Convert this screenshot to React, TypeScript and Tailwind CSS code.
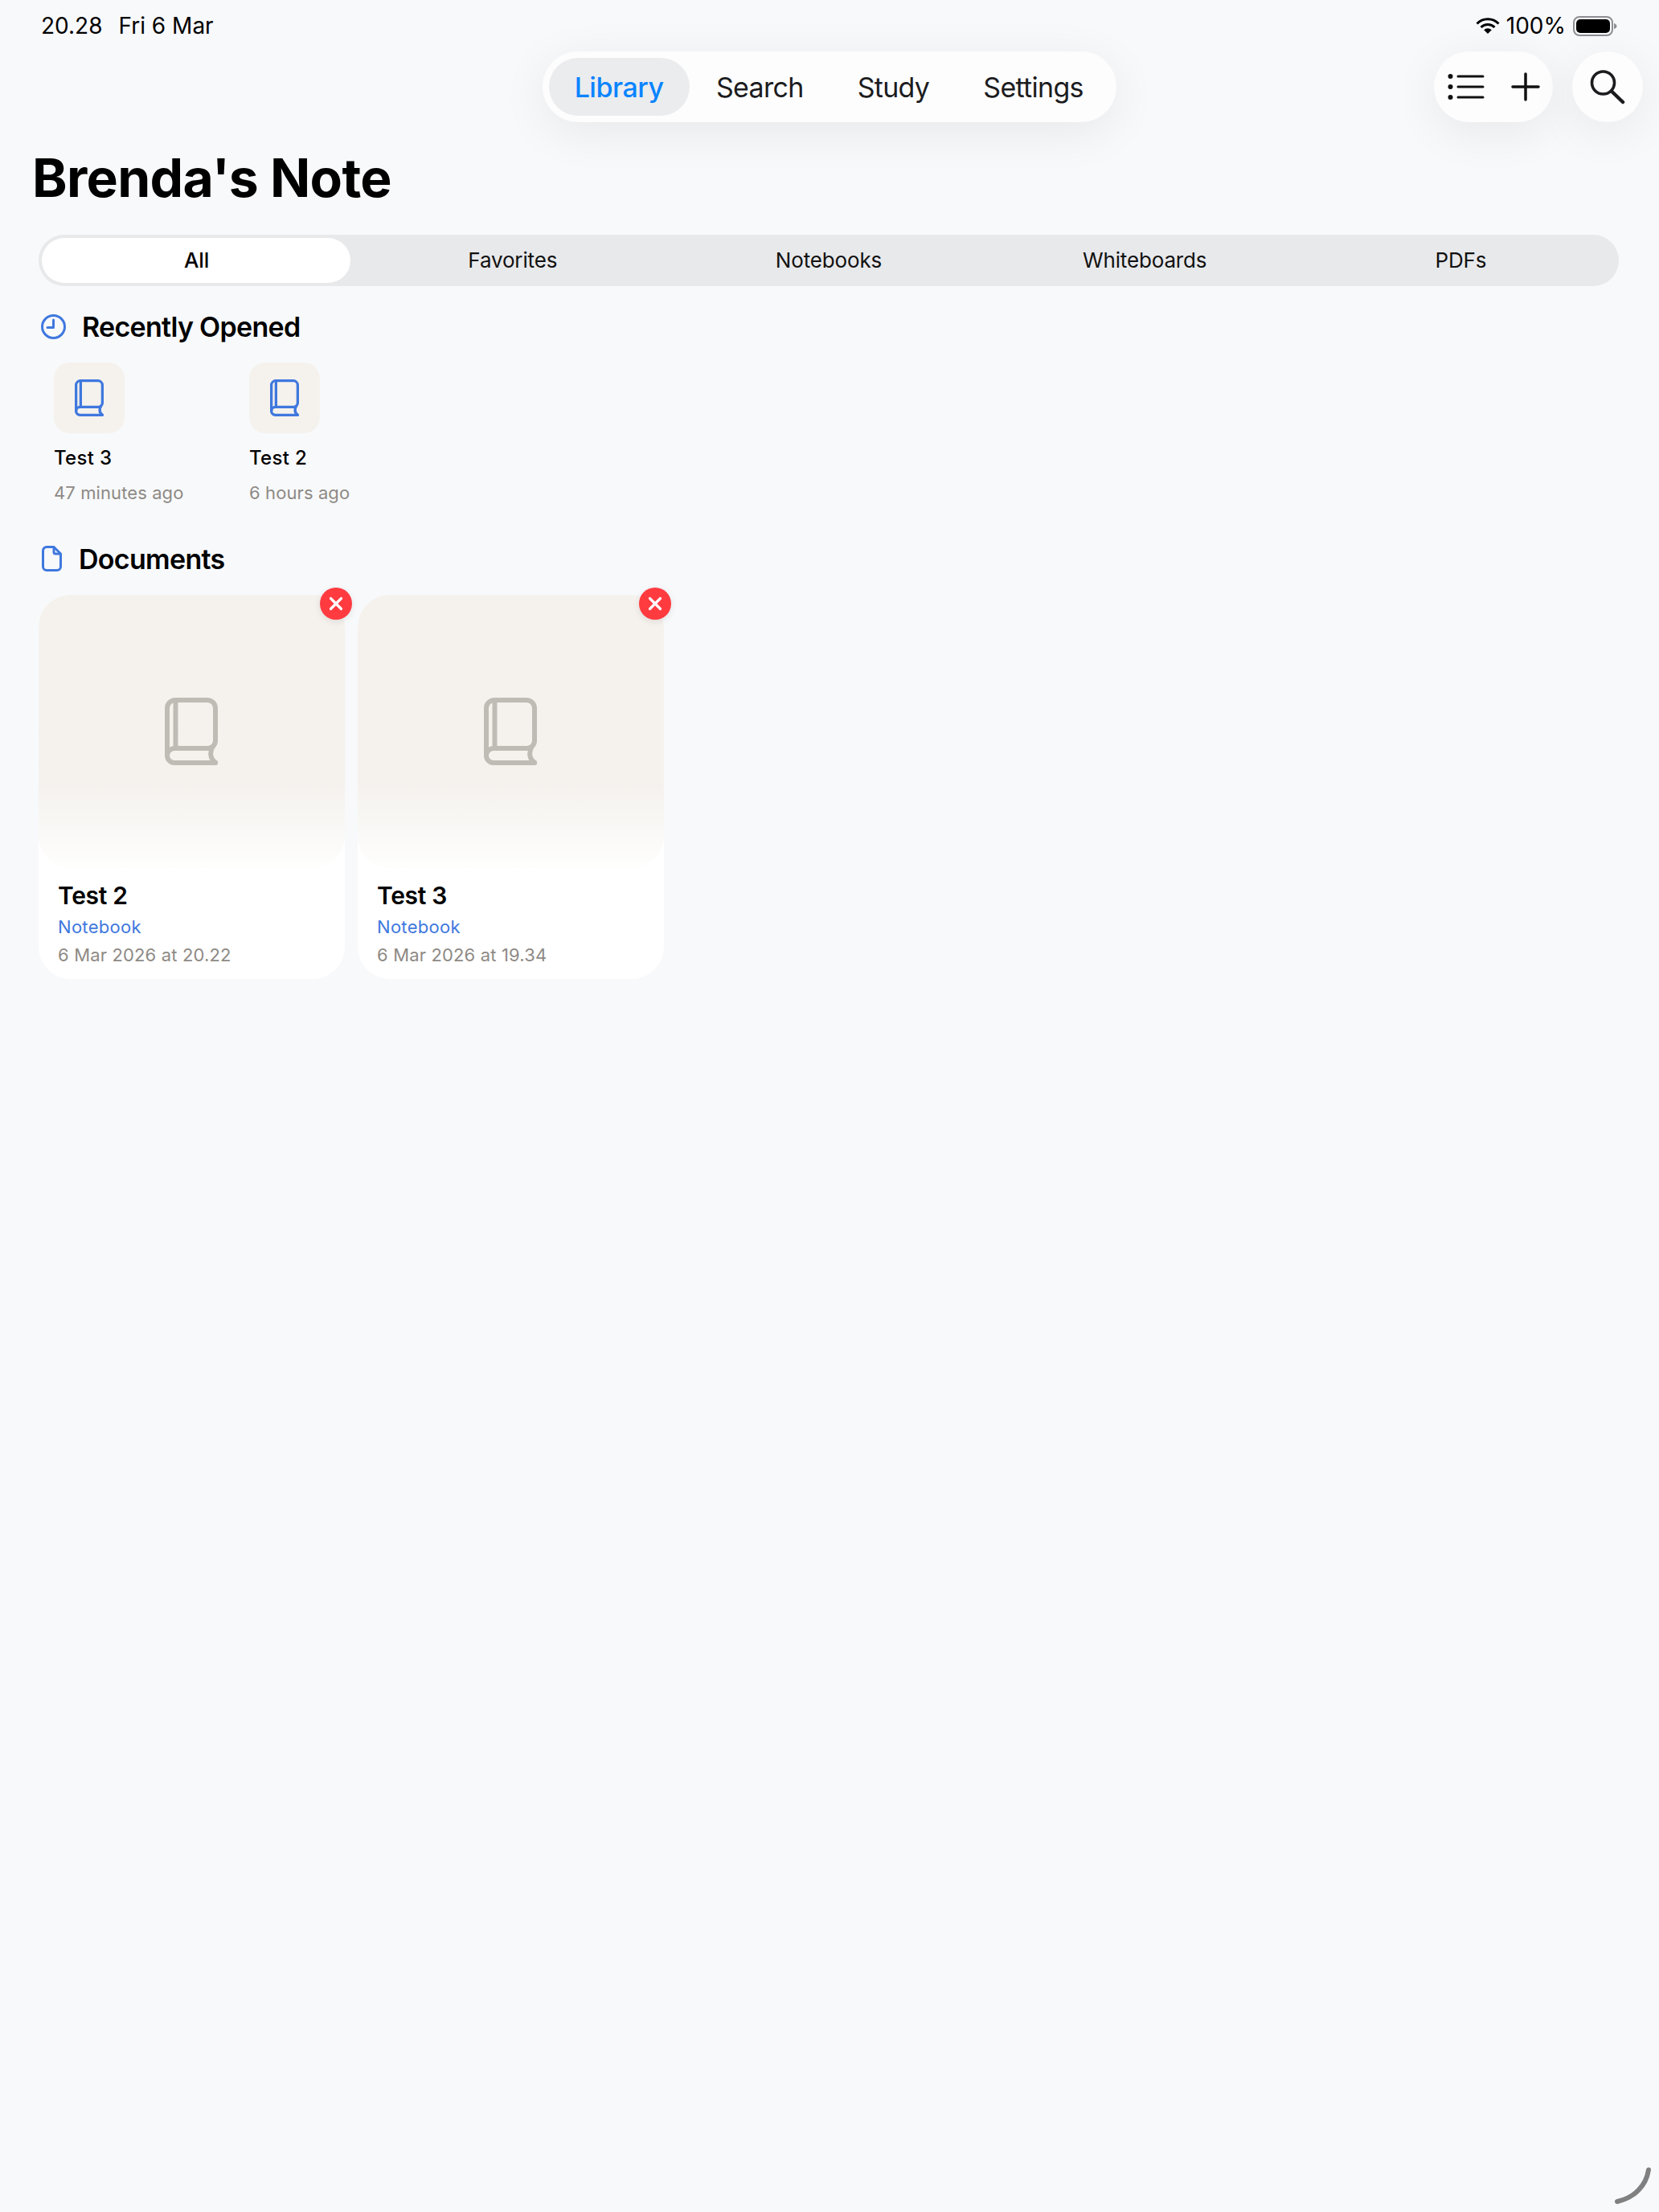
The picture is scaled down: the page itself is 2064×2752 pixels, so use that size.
import React from "react";

const tabs = ["Library", "Search", "Study", "Settings"];
const filters = ["All", "Favorites", "Notebooks", "Whiteboards", "PDFs"];

const recents = [
  { title: "Test 3", time: "47 minutes ago" },
  { title: "Test 2", time: "6 hours ago" },
];

const documents = [
  { title: "Test 2", date: "6 Mar 2026 at 20.22" },
  { title: "Test 3", date: "6 Mar 2026 at 19.34" },
];

function BookIcon({ className }: { className: string }) {
  return (
    <svg viewBox="0 0 66 84" fill="none" stroke="currentColor" strokeWidth="6" strokeLinejoin="round" strokeLinecap="round" className={className}>
      <path d="M13 3H53a10 10 0 0 1 10 10V53a10 10 0 0 1-3.500 8C56 68 56 76 63.500 81H12a9 9 0 0 1-9-9V13A10 10 0 0 1 13 3Z" />
      <path d="M3 72a9 9 0 0 1 9-9H53a10 10 0 0 0 6.500-2" />
      <path d="M13.500 3V63" />
    </svg>
  );
}

function StatusBar() {
  return (
    <div className="flex h-[64px] items-center justify-between pl-[51px] pr-[52px] text-[28px] text-black">
      <div className="flex gap-[20px]">
        <span>20.28</span>
        <span>Fri 6 Mar</span>
      </div>
      <div className="flex items-center">
        <svg viewBox="0 0 30 20" className="h-[20px] w-[30px]" fill="none" stroke="black" strokeWidth="3">
          <path d="M1.500 7.500A19 19 0 0 1 28.500 7.500" />
          <path d="M6.500 12A12 12 0 0 1 23.500 12" />
          <path d="M15 20L10.200 15.200A6.800 6.800 0 0 1 19.800 15.200Z" fill="black" stroke="none" />
        </svg>
        <span className="ml-[8px]">100%</span>
        <svg viewBox="0 0 55 25" className="ml-[9px] h-[25px] w-[55px]">
          <rect x="1" y="1" width="48" height="23" rx="7" fill="none" stroke="#8e8e93" strokeWidth="2" />
          <rect x="4" y="4" width="42" height="17" rx="5" fill="black" />
          <path d="M51 9c2 .5 3.500 2 3.500 3.500S53 15.500 51 16Z" fill="#8e8e93" />
        </svg>
      </div>
    </div>
  );
}

function NavBar() {
  return (
    <div className="grid h-[88px] grid-cols-[1fr_auto_1fr]">
      <div />
      <div className="flex items-center rounded-full bg-[#fdfdfe] p-[8px] shadow-[0_12px_60px_rgba(0,0,0,0.07)]">
        {tabs.map((tab, i) => (
          <div
            key={tab}
            className={
              i === 0
                ? "flex h-[72px] items-center rounded-full bg-[#ebecee] px-[32px] text-[34px] font-medium tracking-[-0.5px] text-[#0a84ff]"
                : "flex h-[72px] items-center px-[33.5px] text-[34px] tracking-[-0.7px] text-[#1c1c1e]"
            }
          >
            {tab}
          </div>
        ))}
      </div>
      <div className="flex justify-end gap-[24px] pr-[20px]">
        <div className="flex h-[88px] w-[148px] items-center justify-center gap-[33px] rounded-full bg-[#fdfdfe] shadow-[0_12px_60px_rgba(0,0,0,0.07)]">
          <svg viewBox="0 0 46 32" className="h-[32px] w-[46px]" fill="none" stroke="#111" strokeWidth="3" strokeLinecap="round">
            <circle cx="3.500" cy="3" r="3" fill="#111" stroke="none" />
            <circle cx="3.500" cy="16" r="3" fill="#111" stroke="none" />
            <circle cx="3.500" cy="29" r="3" fill="#111" stroke="none" />
            <path d="M13 3H44M13 16H44M13 29H44" />
          </svg>
          <svg viewBox="0 0 36 36" className="h-[36px] w-[36px]" fill="none" stroke="#111" strokeWidth="3.500" strokeLinecap="round">
            <path d="M18 2V34M2 18H34" />
          </svg>
        </div>
        <div className="flex h-[88px] w-[88px] items-center justify-center rounded-full bg-[#fdfdfe] shadow-[0_12px_60px_rgba(0,0,0,0.07)]">
          <svg viewBox="0 0 44 44" className="h-[44px] w-[44px]" fill="none" stroke="#1c1c1e" strokeWidth="3.600" strokeLinecap="round">
            <circle cx="16.500" cy="17" r="14" />
            <path d="M27 27.500L41 41" strokeWidth="4.500" />
          </svg>
        </div>
      </div>
    </div>
  );
}

function FilterBar() {
  return (
    <div className="relative mx-[48px] grid h-[64px] w-[1966px] grid-cols-5 items-center rounded-full bg-[#e8e9eb]">
      <div className="absolute left-[4px] top-[4px] h-[56px] w-[384px] rounded-full bg-white" />
      {filters.map((filter, i) => (
        <div
          key={filter}
          className={
            i === 0
              ? "relative pb-[1px] text-center text-[26px] font-medium tracking-[-0.15px] text-black"
              : "relative pb-[1px] text-center text-[26px] tracking-[-0.15px] text-[#111]"
          }
        >
          {filter}
        </div>
      ))}
    </div>
  );
}

function RecentItem({ title, time }: { title: string; time: string }) {
  return (
    <div className="w-[243px]">
      <div className="flex h-[88px] w-[88px] items-center justify-center rounded-[20px] bg-[#f5f2ee]">
        <BookIcon className="h-[46px] w-[36px] text-[#3f78de]" />
      </div>
      <div className="mt-[16px] text-[24px] font-[450] leading-[30px] tracking-[0.3px] text-black">{title}</div>
      <div className="mt-[13px] text-[22px] leading-[30px] tracking-[0.1px] text-[#8e8a85]">{time}</div>
    </div>
  );
}

function DocumentCard({ title, date }: { title: string; date: string }) {
  return (
    <div className="relative h-[478px] w-[381px] rounded-[40px] bg-white">
      <div className="flex h-[340px] items-center justify-center rounded-[40px] bg-gradient-to-b from-[#f5f2ee] from-70% to-[#fefefd]">
        <BookIcon className="mr-[1px] h-[84px] w-[66px] text-[#bfbbb5]" />
      </div>
      <div className="absolute right-[-9px] top-[-9px] flex h-[40px] w-[40px] items-center justify-center rounded-full bg-[#ff3b40] shadow-[0_2px_8px_rgba(0,0,0,0.1)]">
        <svg viewBox="0 0 18 18" className="h-[18px] w-[18px]" stroke="white" strokeWidth="3.200" strokeLinecap="round">
          <path d="M2.500 2.500L15.500 15.500M15.500 2.500L2.500 15.500" />
        </svg>
      </div>
      <div className="px-[24px] pt-[16px]">
        <div className="text-[30px] font-semibold leading-[36px] tracking-[-0.3px] text-black">{title}</div>
        <div className="mt-[6px] text-[22px] leading-[30px] tracking-[0.3px] text-[#3f78de]">Notebook</div>
        <div className="mt-[5px] text-[22px] leading-[30px] tracking-[0.15px] text-[#8e8a85]">{date}</div>
      </div>
    </div>
  );
}

export default function App() {
  return (
    <div className="relative h-[2752px] w-[2064px] overflow-hidden bg-[#f8f9fb] font-['Inter',sans-serif]">
      <StatusBar />
      <NavBar />
      <h1 className="ml-[40px] mb-[31px] mt-[29px] text-[66px] font-bold leading-[80px] tracking-[-0.7px] text-black">Brenda's Note</h1>
      <FilterBar />

      <div className="ml-[51px] mt-[30px] flex h-[40px] items-center gap-[20px]">
        <svg viewBox="0 0 31 31" className="h-[31px] w-[31px]" fill="none" stroke="#3f78de" strokeWidth="3" strokeLinecap="round" strokeLinejoin="round">
          <circle cx="15.500" cy="15.500" r="14" />
          <path d="M15.500 7V16.500H8" />
        </svg>
        <span className="text-[34px] font-semibold tracking-[-0.7px] text-black">Recently Opened</span>
      </div>
      <div className="ml-[67px] mt-[25px] flex">
        {recents.map((item) => (
          <RecentItem key={item.title} title={item.title} time={item.time} />
        ))}
      </div>

      <div className="ml-[52px] mt-[47px] flex h-[40px] items-center gap-[21px]">
        <svg viewBox="0 0 25 32" className="h-[32px] w-[25px]" fill="none" stroke="#3f78de" strokeWidth="3" strokeLinejoin="round">
          <path d="M6 1.500H15L23.500 10V26a4.500 4.500 0 0 1-4.500 4.500H6A4.500 4.500 0 0 1 1.500 26V6A4.500 4.500 0 0 1 6 1.500Z" />
          <path d="M15 1.500V8a2 2 0 0 0 2 2H23.500" />
        </svg>
        <span className="text-[34px] font-semibold tracking-[-0.7px] text-black">Documents</span>
      </div>
      <div className="ml-[48px] mt-[25px] flex gap-[16px]">
        {documents.map((doc) => (
          <DocumentCard key={doc.title} title={doc.title} date={doc.date} />
        ))}
      </div>

      <svg viewBox="0 0 48 48" className="absolute bottom-[9px] right-[9px] h-[48px] w-[48px]" fill="none" stroke="#808080" strokeWidth="6" strokeLinecap="round">
        <path d="M44 4.500C41 24 27 39 5 44" />
      </svg>
    </div>
  );
}
